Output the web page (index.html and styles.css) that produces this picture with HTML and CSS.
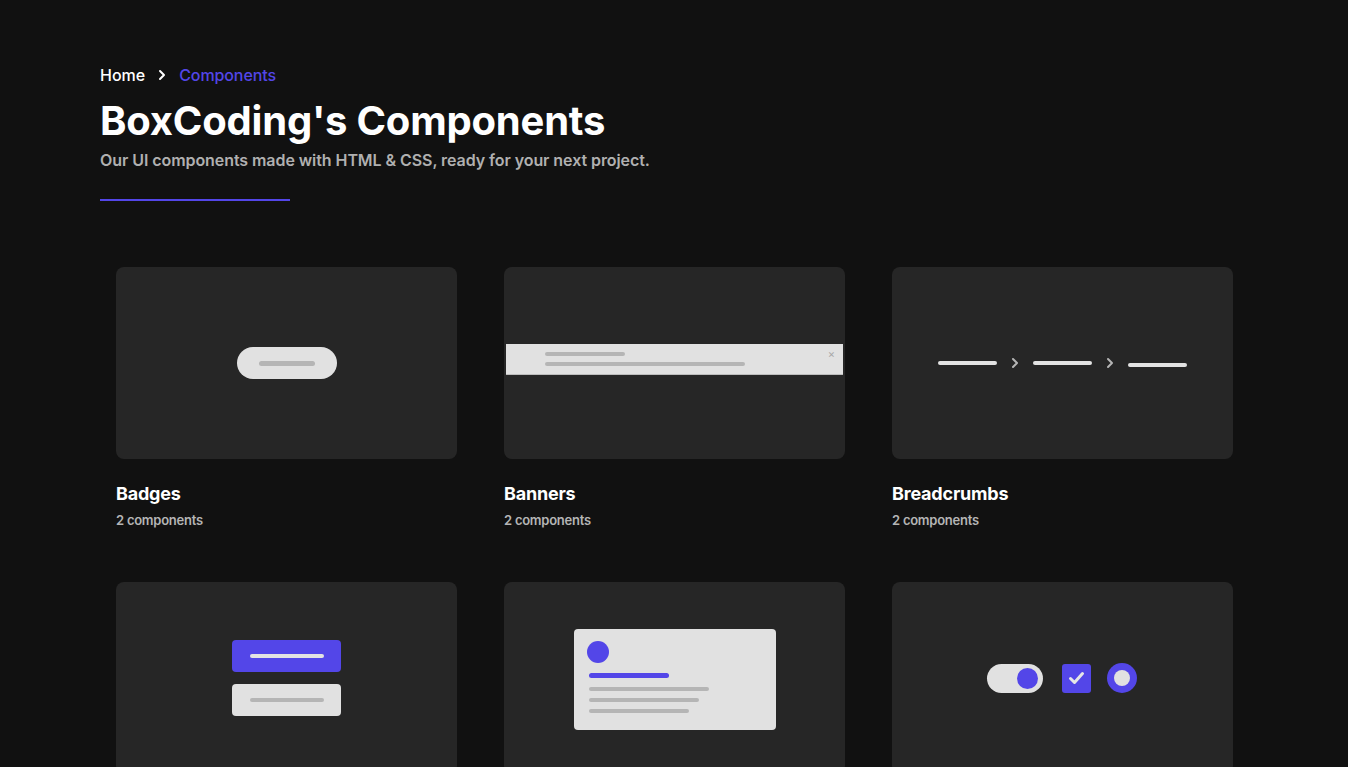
FILE: index.html
```html
<!DOCTYPE html>
<html lang="en">
<head>
<meta charset="utf-8">
<title>BoxCoding's Components</title>
<link rel="stylesheet" href="styles.css">
</head>
<body>
<main class="page">
  <nav class="crumbs">
    <a class="crumb-home" href="#">Home</a>
    <svg class="crumb-sep" width="10" height="12" viewBox="0 0 10 12"><path d="M3 2l4 4-4 4" fill="none" stroke="#fff" stroke-width="2" stroke-linecap="round" stroke-linejoin="round"/></svg>
    <span class="crumb-current">Components</span>
  </nav>
  <h1 class="title">BoxCoding's Components</h1>
  <p class="subtitle">Our UI components made with HTML &amp; CSS, ready for your next project.</p>
  <div class="rule"></div>

  <section class="grid">
    <article class="item">
      <div class="preview">
        <div class="badge"><span class="bar bar-grey badge-bar"></span></div>
      </div>
      <h2 class="item-title">Badges</h2>
      <p class="item-count">2 components</p>
    </article>

    <article class="item">
      <div class="preview">
        <div class="banner">
          <div class="banner-lines">
            <span class="bar bar-grey banner-l1"></span>
            <span class="bar bar-grey banner-l2"></span>
          </div>
          <span class="banner-x">×</span>
        </div>
      </div>
      <h2 class="item-title">Banners</h2>
      <p class="item-count">2 components</p>
    </article>

    <article class="item">
      <div class="preview">
        <div class="bc">
          <span class="bar bar-light bc-line"></span>
          <svg class="bc-chev" width="8" height="12" viewBox="0 0 8 12"><path d="M2 2l4 4-4 4" fill="none" stroke="#b5b5b5" stroke-width="2" stroke-linecap="round" stroke-linejoin="round"/></svg>
          <span class="bar bar-light bc-line"></span>
          <svg class="bc-chev" width="8" height="12" viewBox="0 0 8 12"><path d="M2 2l4 4-4 4" fill="none" stroke="#b5b5b5" stroke-width="2" stroke-linecap="round" stroke-linejoin="round"/></svg>
          <span class="bar bar-light bc-line bc-last"></span>
        </div>
      </div>
      <h2 class="item-title">Breadcrumbs</h2>
      <p class="item-count">2 components</p>
    </article>

    <article class="item">
      <div class="preview">
        <div class="btns">
          <div class="btn btn-primary"><span class="bar bar-light btn-bar"></span></div>
          <div class="btn btn-secondary"><span class="bar bar-grey btn-bar"></span></div>
        </div>
      </div>
      <h2 class="item-title">Buttons</h2>
      <p class="item-count">2 components</p>
    </article>

    <article class="item">
      <div class="preview">
        <div class="card">
          <span class="card-avatar"></span>
          <span class="bar bar-purple card-head"></span>
          <span class="bar bar-grey card-l1"></span>
          <span class="bar bar-grey card-l2"></span>
          <span class="bar bar-grey card-l3"></span>
        </div>
      </div>
      <h2 class="item-title">Cards</h2>
      <p class="item-count">2 components</p>
    </article>

    <article class="item">
      <div class="preview">
        <div class="controls">
          <div class="toggle"><span class="toggle-knob"></span></div>
          <div class="check">
            <svg width="17" height="14" viewBox="0 0 17 14"><path d="M2.5 7.5l4 4 8-9" fill="none" stroke="#e6e6e6" stroke-width="3" stroke-linecap="round" stroke-linejoin="round"/></svg>
          </div>
          <div class="radio"><span class="radio-dot"></span></div>
        </div>
      </div>
      <h2 class="item-title">Inputs</h2>
      <p class="item-count">2 components</p>
    </article>
  </section>
</main>
</body>
</html>
```

FILE: styles.css
```css
* { box-sizing: border-box; }

html, body {
  margin: 0;
  background: #111111;
}

body {
  font-family: Inter, "Noto Sans", "Liberation Sans", sans-serif;
  color: #ffffff;
}

.page {
  padding: 64px 100px 40px;
}

.crumbs {
  display: flex;
  align-items: center;
  gap: 11px;
  height: 22px;
  font-size: 16px;
  font-weight: 500;
}

.crumb-home {
  color: #ffffff;
  text-decoration: none;
}

.crumb-sep { margin-left: 1px; margin-right: 1px; }

.crumb-current {
  color: #5346e8;
  font-weight: 500;
  letter-spacing: -0.1px;
}

.title {
  margin: 11px 0 0;
  font-size: 40px;
  line-height: 48px;
  font-weight: 700;
  letter-spacing: -0.2px;
}

.subtitle {
  margin: 4px 0 0;
  font-size: 16px;
  line-height: 22px;
  font-weight: 600;
  letter-spacing: -0.07px;
  color: #b0b0b0;
}

.rule {
  width: 190px;
  height: 2px;
  margin-top: 28px;
  background: #5346e8;
}

.grid {
  display: grid;
  grid-template-columns: repeat(3, 341px);
  column-gap: 47px;
  row-gap: 0;
  padding: 0 16px;
  margin-top: 66px;
}

.item {
  height: 315px;
}

.preview {
  height: 192px;
  background: #262626;
  border-radius: 8px;
  display: flex;
  align-items: center;
  justify-content: center;
}

.item-title {
  margin: 23px 0 0;
  font-size: 18px;
  line-height: 24px;
  font-weight: 700;
  letter-spacing: -0.2px;
}

.item-count {
  margin: 5px 0 0;
  font-size: 13px;
  line-height: 18px;
  font-weight: 600;
  letter-spacing: -0.25px;
  color: #b5b5b5;
}

.bar {
  display: block;
  border-radius: 3px;
}
.bar-grey { background: #b5b5b5; }
.bar-light { background: #e3e3e3; }
.bar-purple { background: #5346e8; }

/* badge */
.badge {
  width: 100px;
  height: 32px;
  border-radius: 16px;
  background: #e1e1e1;
  display: flex;
  align-items: center;
  justify-content: center;
}
.badge-bar { width: 56px; height: 5px; }

/* banner */
.banner {
  width: 337px;
  height: 31px;
  background: #e1e1e1;
  border-bottom: 1px solid #bdbdbd;
  display: flex;
  align-items: center;
  justify-content: space-between;
  padding: 0 8px 0 39px;
  margin-bottom: 8px;
}
.banner-lines {
  display: flex;
  flex-direction: column;
  gap: 6px;
}
.banner-l1 { width: 80px; height: 4px; }
.banner-l2 { width: 200px; height: 4px; }
.banner-x {
  color: #a8a8a8;
  font-size: 11px;
  line-height: 10px;
  margin-top: -10px;
}

/* breadcrumbs */
.bc {
  display: flex;
  align-items: center;
  gap: 10px;
}
.bc-line { width: 59px; height: 4px; }
.bc-chev { margin: 0 4px; }
.bc-last { margin-top: 3px; }

/* buttons */
.btns {
  display: flex;
  flex-direction: column;
  gap: 12px;
}
.btn {
  width: 109px;
  height: 32px;
  border-radius: 4px;
  display: flex;
  align-items: center;
  justify-content: center;
}
.btn-primary { background: #5346e8; }
.btn-secondary { background: #e1e1e1; }
.btn-bar { width: 74px; height: 4px; margin-left: 1px; }

/* card */
.card {
  width: 202px;
  height: 101px;
  background: #e1e1e1;
  border-radius: 4px;
  padding: 12px 15px 0 13px;
  display: flex;
  flex-direction: column;
  margin-top: 2px;
}
.card-avatar {
  width: 22px;
  height: 22px;
  border-radius: 50%;
  background: #5346e8;
}
.card-head { width: 80px; height: 5px; margin: 10px 0 0 2px; }
.card-l1 { width: 120px; height: 4px; margin: 9px 0 0 2px; }
.card-l2 { width: 110px; height: 4px; margin: 7px 0 0 2px; }
.card-l3 { width: 100px; height: 4px; margin: 7px 0 0 2px; }

/* inputs */
.controls {
  display: flex;
  align-items: center;
  gap: 19px;
  margin-left: -2px;
}
.toggle {
  width: 56px;
  height: 29px;
  border-radius: 15px;
  background: #e1e1e1;
  display: flex;
  align-items: center;
  justify-content: flex-end;
  padding-right: 5px;
}
.toggle-knob {
  width: 21px;
  height: 21px;
  border-radius: 50%;
  background: #5346e8;
}
.check {
  width: 29px;
  height: 29px;
  border-radius: 3px;
  background: #5346e8;
  display: flex;
  align-items: center;
  justify-content: center;
}
.radio {
  width: 30px;
  height: 30px;
  border-radius: 50%;
  background: #5346e8;
  display: flex;
  align-items: center;
  justify-content: center;
  margin-left: -3px;
}
.radio-dot {
  width: 16px;
  height: 16px;
  border-radius: 50%;
  background: #e1e1e1;
}
```
